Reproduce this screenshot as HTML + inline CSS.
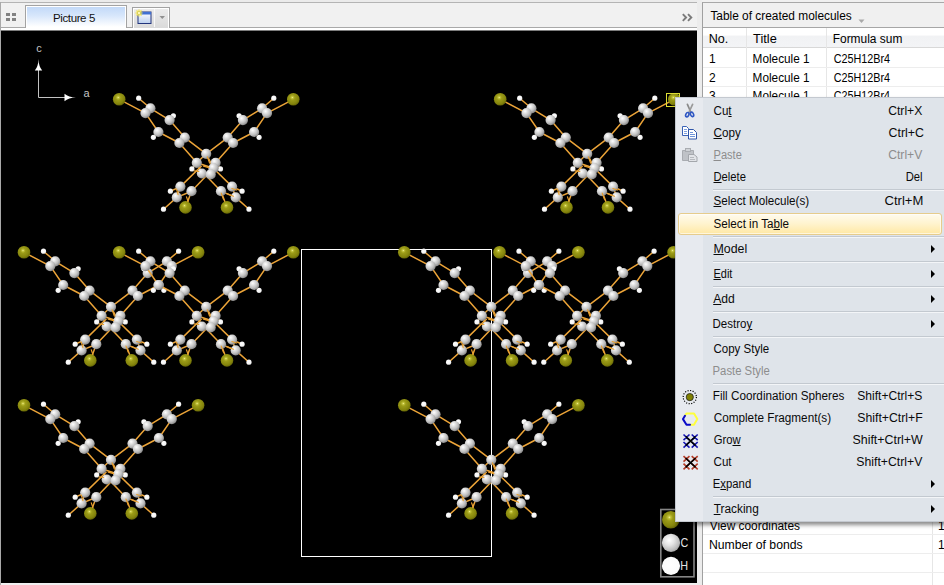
<!DOCTYPE html>
<html><head><meta charset="utf-8"><title>Picture 5</title>
<style>
*{box-sizing:border-box;margin:0;padding:0}
html,body{width:944px;height:585px;overflow:hidden;background:#f0f0f0;font-family:"Liberation Sans",sans-serif;font-size:12px;color:#000}
.abs{position:absolute}
#topbar{left:0;top:0;width:697px;height:30px;background:linear-gradient(#ebebeb 0,#ebebeb 2px,#f1f1f1 3px,#f1f1f1 27px,#fff 28px)}
#topline{left:0;top:2px;width:697px;height:1px;background:#b4b4b4}
#baseline{left:1px;top:27px;width:696px;height:1px;background:#a9a9a9}
#leftline{left:0;top:2px;width:1px;height:583px;background:#a9a9a9}
#tab{left:25px;top:5px;width:102px;height:23px;border:1px solid #a3a3a3;border-bottom:none;background:linear-gradient(#c0d8f8 0%,#d8e7fb 45%,#ffffff 95%);box-shadow:inset 0 0 0 1px #fff}
#tabtxt{left:25px;top:5px;width:102px;height:23px;line-height:26px;text-align:center;font-size:11.5px;letter-spacing:-.4px;color:#111;padding-right:4px}
#btn{left:132px;top:7px;width:38px;height:21px;border:1px solid #a2a2a2;border-bottom:none;background:linear-gradient(#ececec,#dadada);box-shadow:inset 1px 1px 0 #fff,inset -1px 0 0 #fff}
#canvas{left:1px;top:30px;width:696px;height:553px;background:#000;border-top:1px solid #7c7c7c}
#split{left:697px;top:0;width:5px;height:585px;background:#ececec}
#rp{left:702px;top:2px;width:242px;height:583px;background:#fff;border-left:1px solid #a0a0a0;border-top:1px solid #a8a8a8}
#rphead{left:703px;top:3px;width:241px;height:25px;background:#f0f0f0;border-bottom:1px solid #a6a6a6}
.t{position:absolute;white-space:nowrap;font-size:12px;line-height:14px;height:14px;transform-origin:0 50%}
#thead{left:703px;top:28px;width:241px;height:20px;background:linear-gradient(#ffffff 0%,#ffffff 36%,#f1f2f4 44%,#f3f4f6 100%);border-bottom:1px solid #d8d8d8}
.vl{position:absolute;width:1px;background:#e6e6e6}
.hl{position:absolute;height:1px;left:703px;width:241px;background:#ededed}
#menu{left:675px;top:97px;width:273px;height:425px;background:#dfe4ea;border:1px solid #c4c9d0;box-shadow:2px 3px 4px rgba(0,0,0,.45)}
#gutter{left:676px;top:98px;width:27px;height:423px;background:#e7eaef}
.sep{position:absolute;left:713px;width:231px;height:1px;background:#c3c9d0;border-bottom:1px solid #f3f5f8;box-sizing:content-box}
.mi{position:absolute;left:713px;white-space:nowrap;font-size:12px;line-height:14px;height:14px;transform-origin:0 50%;color:#0a0a0a}
.sc{position:absolute;right:21px;white-space:nowrap;font-size:12px;line-height:14px;height:14px;transform-origin:100% 50%;color:#0a0a0a}
.dis{color:#8d8d8d}
u{text-decoration:underline;text-underline-offset:1px}
.arr{position:absolute;left:931px;width:0;height:0;border-left:4px solid #000;border-top:4px solid transparent;border-bottom:4px solid transparent}
#hi{left:678px;top:213px;width:264px;height:22px;border:1px solid #e6cc8c;border-radius:3px;background:linear-gradient(#fffbee 0%,#fff3cd 50%,#ffe8a4 100%);box-shadow:inset 0 0 0 1px rgba(255,255,255,.6)}
</style></head><body>
<div class="abs" id="topbar"></div>
<div class="abs" id="topline"></div>
<div class="abs" id="baseline"></div>
<div class="abs" id="tab"></div>
<div class="abs" id="tabtxt">Picture 5</div>
<div class="abs" id="btn"></div>
<svg class="abs" style="left:0;top:0" width="697" height="30" viewBox="0 0 697 30">
 <g fill="#828282"><rect x="6" y="13" width="4" height="3"/><rect x="12" y="13" width="4" height="3"/><rect x="6" y="18" width="4" height="3"/><rect x="12" y="18" width="4" height="3"/></g>
 <!-- window icon -->
 <defs><linearGradient id="wg" x1="0" y1="0" x2="0" y2="1"><stop offset="0" stop-color="#fff"/><stop offset="1" stop-color="#bcd0ee"/></linearGradient></defs>
 <rect x="138" y="12" width="13" height="11.500" fill="url(#wg)" stroke="#22357c"/>
 <rect x="138" y="12" width="13" height="2.500" fill="#3f70d2"/>
 <g stroke="#f4e44c" stroke-width="1.2"><line x1="139" y1="9.5" x2="139" y2="16.5"/><line x1="135.5" y1="13" x2="142.5" y2="13"/><line x1="136.5" y1="10.5" x2="141.5" y2="15.5"/><line x1="141.5" y1="10.5" x2="136.5" y2="15.5"/></g>
 <rect x="138" y="12" width="2" height="2" fill="#fff8b0"/>
 <line x1="154.5" y1="9" x2="154.5" y2="27" stroke="#f8f8f8"/>
 <path d="M159.5 16 h5.5 l-2.75 3z" fill="#909090"/>
 <g fill="none" stroke="#7a7a7a" stroke-width="1.9"><path d="M682.8 14.200 l3.300 3.300 l-3.300 3.300"/><path d="M688 14.200 l3.300 3.300 l-3.300 3.300"/></g>
</svg>

<div class="abs" id="canvas"></div>
<div class="abs" id="leftline"></div>
<svg class="abs" style="left:2px;top:30px" width="695" height="553" viewBox="0 0 695 553">
<defs>
 <radialGradient id="gc" cx="0.36" cy="0.32" r="0.75"><stop offset="0" stop-color="#ffffff"/><stop offset="0.28" stop-color="#e2e2e2"/><stop offset="0.62" stop-color="#bebebe"/><stop offset="1" stop-color="#7c7c7c"/></radialGradient>
 <radialGradient id="gh" cx="0.4" cy="0.4" r="0.7"><stop offset="0" stop-color="#ffffff"/><stop offset="0.7" stop-color="#f4f4f4"/><stop offset="1" stop-color="#c8c8c8"/></radialGradient>
 <radialGradient id="gb" cx="0.42" cy="0.36" r="0.72"><stop offset="0" stop-color="#f2f29a"/><stop offset="0.1" stop-color="#c4c43c"/><stop offset="0.28" stop-color="#9c9c18"/><stop offset="0.7" stop-color="#84840c"/><stop offset="1" stop-color="#565604"/></radialGradient>
 <radialGradient id="gc2" cx="0.4" cy="0.36" r="0.7"><stop offset="0" stop-color="#ffffff"/><stop offset="0.4" stop-color="#e4e4e4"/><stop offset="0.8" stop-color="#bcbcbc"/><stop offset="1" stop-color="#9a9a9a"/></radialGradient>
 <radialGradient id="gh2" cx="0.45" cy="0.45" r="0.6"><stop offset="0" stop-color="#ffffff"/><stop offset="0.85" stop-color="#fbfbfb"/><stop offset="1" stop-color="#e2e2e2"/></radialGradient>
 <g id="mol">
<g stroke="#eca438" stroke-width="1.5" stroke-linecap="round">
<line x1="0" y1="0" x2="26.3" y2="13.8"/>
<line x1="174.1" y1="0" x2="147.8" y2="13.8"/>
<line x1="19.5" y1="-1.1" x2="31.2" y2="9"/>
<line x1="154.6" y1="-1.1" x2="142.9" y2="9"/>
<line x1="31.2" y1="9" x2="50.4" y2="20.8"/>
<line x1="142.9" y1="9" x2="123.7" y2="20.8"/>
<line x1="26.3" y1="13.8" x2="39.2" y2="32.7"/>
<line x1="147.8" y1="13.8" x2="134.9" y2="32.7"/>
<line x1="50.4" y1="20.8" x2="65.6" y2="38.3"/>
<line x1="123.7" y1="20.8" x2="108.5" y2="38.3"/>
<line x1="39.2" y1="32.7" x2="60.2" y2="43.7"/>
<line x1="134.9" y1="32.7" x2="113.9" y2="43.7"/>
<line x1="31.2" y1="9" x2="26.3" y2="13.8"/>
<line x1="142.9" y1="9" x2="147.8" y2="13.8"/>
<line x1="65.6" y1="38.3" x2="60.2" y2="43.7"/>
<line x1="108.5" y1="38.3" x2="113.9" y2="43.7"/>
<line x1="50.4" y1="20.8" x2="54.2" y2="16.5"/>
<line x1="123.7" y1="20.8" x2="119.9" y2="16.5"/>
<line x1="39.2" y1="32.7" x2="34.2" y2="38"/>
<line x1="134.9" y1="32.7" x2="139.9" y2="38"/>
<line x1="65.6" y1="38.3" x2="87" y2="54.5"/>
<line x1="108.5" y1="38.3" x2="87.1" y2="54.5"/>
<line x1="60.2" y1="43.7" x2="77.6" y2="63.5"/>
<line x1="113.9" y1="43.7" x2="96.4" y2="63.5"/>
<line x1="87" y1="54.5" x2="94.3" y2="68.9"/>
<line x1="87" y1="54.5" x2="77.6" y2="63.5"/>
<line x1="77.6" y1="63.5" x2="82.7" y2="74.2"/>
<line x1="94.3" y1="68.9" x2="91.5" y2="75.1"/>
<line x1="82.7" y1="74.2" x2="91.5" y2="75.1"/>
<line x1="77.6" y1="63.5" x2="94.3" y2="68.9"/>
<line x1="77.6" y1="63.5" x2="72.7" y2="69.6"/>
<line x1="96.4" y1="63.5" x2="101.3" y2="69.6"/>
<line x1="61.2" y1="87.3" x2="82" y2="67"/>
<line x1="112.9" y1="87.3" x2="92.1" y2="67"/>
<line x1="72.3" y1="91.9" x2="94.3" y2="68.9"/>
<line x1="101.8" y1="91.9" x2="79.8" y2="68.9"/>
<line x1="61.2" y1="87.3" x2="51.2" y2="91.9"/>
<line x1="112.9" y1="87.3" x2="122.9" y2="91.9"/>
<line x1="61.2" y1="87.3" x2="57.6" y2="98.1"/>
<line x1="112.9" y1="87.3" x2="116.5" y2="98.1"/>
<line x1="72.3" y1="91.9" x2="57.6" y2="98.1"/>
<line x1="101.8" y1="91.9" x2="116.5" y2="98.1"/>
<line x1="72.3" y1="91.9" x2="66.3" y2="108.1"/>
<line x1="101.8" y1="91.9" x2="107.8" y2="108.1"/>
<line x1="57.6" y1="98.1" x2="44.3" y2="109.9"/>
<line x1="116.5" y1="98.1" x2="129.8" y2="109.9"/>
</g>
<circle cx="19.5" cy="-1.1" r="2.6" fill="url(#gh)"/>
<circle cx="154.6" cy="-1.1" r="2.6" fill="url(#gh)"/>
<circle cx="31.2" cy="9" r="5.1" fill="url(#gc)"/>
<circle cx="142.9" cy="9" r="5.1" fill="url(#gc)"/>
<circle cx="26.3" cy="13.8" r="5.1" fill="url(#gc)"/>
<circle cx="147.8" cy="13.8" r="5.1" fill="url(#gc)"/>
<circle cx="54.2" cy="16.5" r="2.6" fill="url(#gh)"/>
<circle cx="119.9" cy="16.5" r="2.6" fill="url(#gh)"/>
<circle cx="50.4" cy="20.8" r="5.1" fill="url(#gc)"/>
<circle cx="123.7" cy="20.8" r="5.1" fill="url(#gc)"/>
<circle cx="34.2" cy="38" r="2.6" fill="url(#gh)"/>
<circle cx="139.9" cy="38" r="2.6" fill="url(#gh)"/>
<circle cx="39.2" cy="32.7" r="5.1" fill="url(#gc)"/>
<circle cx="134.9" cy="32.7" r="5.1" fill="url(#gc)"/>
<circle cx="65.6" cy="38.3" r="5.1" fill="url(#gc)"/>
<circle cx="108.5" cy="38.3" r="5.1" fill="url(#gc)"/>
<circle cx="60.2" cy="43.7" r="5.1" fill="url(#gc)"/>
<circle cx="113.9" cy="43.7" r="5.1" fill="url(#gc)"/>
<circle cx="0" cy="0" r="6.3" fill="url(#gb)"/>
<circle cx="174.1" cy="0" r="6.3" fill="url(#gb)"/>
<circle cx="87" cy="54.5" r="5.1" fill="url(#gc)"/>
<circle cx="77.6" cy="63.5" r="5.1" fill="url(#gc)"/>
<circle cx="96.4" cy="63.5" r="5.1" fill="url(#gc)"/>
<circle cx="72.7" cy="69.6" r="2.6" fill="url(#gh)"/>
<circle cx="101.3" cy="69.6" r="2.6" fill="url(#gh)"/>
<circle cx="94.3" cy="68.9" r="5.1" fill="url(#gc)"/>
<circle cx="82.7" cy="74.2" r="5.1" fill="url(#gc)"/>
<circle cx="91.5" cy="75.1" r="5.1" fill="url(#gc)"/>
<circle cx="61.2" cy="87.3" r="5.1" fill="url(#gc)"/>
<circle cx="112.9" cy="87.3" r="5.1" fill="url(#gc)"/>
<circle cx="72.3" cy="91.9" r="5.1" fill="url(#gc)"/>
<circle cx="101.8" cy="91.9" r="5.1" fill="url(#gc)"/>
<circle cx="51.2" cy="91.9" r="2.6" fill="url(#gh)"/>
<circle cx="122.9" cy="91.9" r="2.6" fill="url(#gh)"/>
<circle cx="57.6" cy="98.1" r="5.1" fill="url(#gc)"/>
<circle cx="116.5" cy="98.1" r="5.1" fill="url(#gc)"/>
<circle cx="44.3" cy="109.9" r="2.6" fill="url(#gh)"/>
<circle cx="129.8" cy="109.9" r="2.6" fill="url(#gh)"/>
<circle cx="66.3" cy="108.1" r="6.3" fill="url(#gb)"/>
<circle cx="107.8" cy="108.1" r="6.3" fill="url(#gb)"/>
<g stroke="#e8a030" stroke-width="1.2" stroke-linecap="round">
<line x1="75" y1="71.5" x2="79.6" y2="72.2"/>
<line x1="84.3" y1="66.9" x2="89.6" y2="68.4"/>
<line x1="88.1" y1="57.6" x2="90.4" y2="63.8"/>
<line x1="57.3" y1="89.9" x2="58.9" y2="95.3"/>
<line x1="67.3" y1="97.6" x2="68.9" y2="102.2"/>
<line x1="112.7" y1="89.2" x2="117.3" y2="90.7"/>
<line x1="108.1" y1="94.5" x2="114.3" y2="96.9"/>
<line x1="102" y1="93.8" x2="104.3" y2="99.9"/>
</g>
 </g>
</defs>
<!-- unit cell -->
<rect x="299.5" y="219.5" width="190" height="307" fill="none" stroke="#fff" stroke-width="1"/>
<!-- axes -->
<g stroke="#c2c2c2" stroke-width="1" fill="#fff">
 <line x1="36.5" y1="40" x2="36.5" y2="67.5"/><line x1="36.5" y1="67.5" x2="63" y2="67.5"/>
 <path d="M36.5 29 Q36.300 36.500 32.800 40.500 L40.200 40.500 Q36.700 36.500 36.500 29z" stroke="none"/><path d="M74 67.500 Q66.500 67.300 62.500 63.800 L62.500 71.200 Q66.500 67.700 74 67.500z" stroke="none"/>
</g>
<text x="34.2" y="21.500" fill="#c4c4c4" font-family="Liberation Sans, sans-serif" font-size="11">c</text>
<text x="81.500" y="66.800" fill="#c4c4c4" font-family="Liberation Sans, sans-serif" font-size="11">a</text>
<use href="#mol" x="117.2" y="69.3"/>
<use href="#mol" x="498.2" y="69.3"/>
<use href="#mol" x="22" y="222.3"/>
<use href="#mol" x="117.2" y="222.3"/>
<use href="#mol" x="402.3" y="222.3"/>
<use href="#mol" x="497.5" y="222.3"/>
<use href="#mol" x="22" y="375.3"/>
<use href="#mol" x="402.3" y="375.3"/>
<!-- selection box -->
<rect x="664.5" y="63.500" width="13" height="13" fill="none" stroke="#dcdc34" stroke-width="1"/>
<!-- legend -->
<rect x="658.800" y="479.500" width="33.200" height="67.300" fill="#000" stroke="#858585" stroke-width="1.6"/>
<circle cx="668.800" cy="489.800" r="8.800" fill="url(#gb)"/>
<circle cx="669" cy="512.8" r="9.100" fill="url(#gc2)"/>
<circle cx="669" cy="535.9" r="9.100" fill="url(#gh2)"/>
<text transform="translate(678.300,492.300) scale(0.9,1)" fill="#e4e4e4" font-family="Liberation Sans, sans-serif" font-size="12">Br</text>
<text transform="translate(678.400,517.200) scale(0.86,1)" fill="#e4e4e4" font-family="Liberation Sans, sans-serif" font-size="12.5">C</text>
<text transform="translate(678.300,539.900) scale(0.9,1)" fill="#e4e4e4" font-family="Liberation Sans, sans-serif" font-size="12">H</text>
</svg>

<div class="abs" id="split"></div>
<div class="abs" id="rp"></div>
<div class="abs" id="rphead"></div>
<div class="t" style="left:710px;top:9px;transform:translateX(0.4px) scaleX(0.9902)">Table of created molecules</div>
<svg class="abs" style="left:858px;top:19px" width="8" height="5"><path d="M0.500 0.500 h6 l-3 3.500z" fill="#a9a9a9"/></svg>
<div class="abs" id="thead"></div>
<div class="vl" style="left:746px;top:28px;height:70px"></div>
<div class="vl" style="left:826px;top:28px;height:70px"></div>
<div class="t" style="left:709px;top:32px;transform:translateX(-0.25px) scaleX(1.0471)">No.</div>
<div class="t" style="left:753px;top:32px;transform:translateX(0.1px) scaleX(1.0636)">Title</div>
<div class="t" style="left:833px;top:32px;transform:translateX(-0.29px) scaleX(0.9942)">Formula sum</div>
<div class="hl" style="top:67px"></div><div class="hl" style="top:86px"></div>
<div class="t" style="left:709px;top:52px">1</div><div class="t" style="left:753px;top:52px;transform:translateX(-0.38px) scaleX(0.9807)">Molecule 1</div><div class="t" style="left:833px;top:52px;transform:translateX(0.7px) scaleX(0.9)">C25H12Br4</div>
<div class="t" style="left:709px;top:71px">2</div><div class="t" style="left:753px;top:71px;transform:translateX(-0.38px) scaleX(0.9807)">Molecule 1</div><div class="t" style="left:833px;top:71px;transform:translateX(0.7px) scaleX(0.9)">C25H12Br4</div>
<div class="t" style="left:709px;top:89px">3</div><div class="t" style="left:753px;top:89px;transform:translateX(-0.38px) scaleX(0.9807)">Molecule 1</div><div class="t" style="left:833px;top:89px;transform:translateX(0.7px) scaleX(0.9)">C25H12Br4</div>
<!-- bottom table -->
<div class="vl" style="left:932px;top:515px;height:70px"></div>
<div class="hl" style="top:534px"></div><div class="hl" style="top:553px"></div><div class="hl" style="top:572px"></div>
<div class="t" style="left:710px;top:519px;transform:translateX(-0.3px) scaleX(0.99)">View coordinates</div><div class="t" style="left:938px;top:519px">1</div>
<div class="t" style="left:710px;top:538px;transform:translateX(-1.12px) scaleX(1.0187)">Number of bonds</div><div class="t" style="left:938px;top:538px">1</div>

<!-- context menu -->
<div class="abs" id="menu"></div>
<div class="abs" id="gutter"></div>
<div class="abs" id="hi"></div>
<div class="mi" style="top:104px;transform:translateX(0.5px) scaleX(0.9684)">Cu<u>t</u></div><div class="sc" style="top:104px;transform:translateX(-0.4px) scaleX(1.0121)">Ctrl+X</div>
<div class="mi" style="top:126px;transform:translateX(0.5px) scaleX(0.9714)"><u>C</u>opy</div><div class="sc" style="top:126px;transform:translateX(0.63px) scaleX(1.0303)">Ctrl+C</div>
<div class="mi dis" style="top:148px;transform:translateX(0.5px) scaleX(0.9233)"><u>P</u>aste</div><div class="sc dis" style="top:148px;transform:translateX(-0.4px) scaleX(1.0121)">Ctrl+V</div>
<div class="mi" style="top:170px;transform:translateX(0.5px) scaleX(0.9343)"><u>D</u>elete</div><div class="sc" style="top:170px;transform:translateX(-0.4px) scaleX(0.9353)">Del</div>
<div class="sep" style="top:189px"></div>
<div class="mi" style="top:194px;transform:translateX(0.5px) scaleX(0.9684)"><u>S</u>elect Molecule(s)</div><div class="sc" style="top:194px;transform:translateX(0.69px) scaleX(1.0882)">Ctrl+M</div>
<div class="mi" style="top:217px;transform:translateX(0.5px) scaleX(0.9705)">Select in Ta<u>b</u>le</div>
<div class="mi" style="top:242px;transform:translateX(0.5px) scaleX(1.0312)"><u>M</u>odel</div><div class="arr" style="top:245px"></div>
<div class="sep" style="top:236px"></div>
<div class="sep" style="top:261px"></div>
<div class="mi" style="top:267px;transform:translateX(0.5px) scaleX(0.9143)"><u>E</u>dit</div><div class="arr" style="top:270px"></div>
<div class="sep" style="top:286px"></div>
<div class="mi" style="top:292px;transform:translateX(0.2px) scaleX(1.0095)"><u>A</u>dd</div><div class="arr" style="top:295px"></div>
<div class="sep" style="top:311px"></div>
<div class="mi" style="top:317px;transform:translateX(-0.46px) scaleX(0.961)">Destro<u>y</u></div><div class="arr" style="top:320px"></div>
<div class="sep" style="top:336px"></div>
<div class="mi" style="top:342px;transform:translateX(0.5px) scaleX(0.9586)">Copy Style</div>
<div class="mi dis" style="top:364px;transform:translateX(-0.44px) scaleX(0.9424)">Paste Style</div>
<div class="sep" style="top:383px"></div>
<div class="mi" style="top:389px;transform:translateX(-0.28px) scaleX(0.9769)">Fill Coordination Spheres</div><div class="sc" style="top:389px;transform:translateX(-0.3px) scaleX(1.0063)">Shift+Ctrl+S</div>
<div class="mi" style="top:411px;transform:translateX(0.7px) scaleX(0.9783)">Complete Fragment(s)</div><div class="sc" style="top:411px;transform:translateX(-0.3px) scaleX(1.0222)">Shift+Ctrl+F</div>
<div class="mi" style="top:433px;transform:translateX(0.7px) scaleX(0.9379)">Gro<u>w</u></div><div class="sc" style="top:433px;transform:translateX(-0.3px) scaleX(1.0328)">Shift+Ctrl+W</div>
<div class="mi" style="top:455px;transform:translateX(0.5px) scaleX(0.9684)">Cut</div><div class="sc" style="top:455px;transform:translateX(-0.3px) scaleX(1.0219)">Shift+Ctrl+V</div>
<div class="mi" style="top:477px;transform:translateX(-0.24px) scaleX(0.9436)">E<u>x</u>pand</div><div class="arr" style="top:480px"></div>
<div class="sep" style="top:496px"></div>
<div class="mi" style="top:502px;transform:translateX(0.7px) scaleX(0.9889)"><u>T</u>racking</div><div class="arr" style="top:505px"></div>
<svg class="abs" id="icons" style="left:676px;top:97px" width="30" height="425" viewBox="676 97 30 425">
<!-- scissors -->
<g fill="none" stroke-linecap="round">
 <path d="M687.400 104.300 L691 112.500" stroke="#8a8a8a" stroke-width="1.7"/>
 <path d="M692.600 104.300 L688.800 112.500" stroke="#9a9a9a" stroke-width="1.7"/>
 <ellipse cx="687.300" cy="114.700" rx="1.500" ry="2.300" stroke="#2f57c3" stroke-width="1.600" transform="rotate(25 687.300 114.700)"/>
 <ellipse cx="692" cy="114.400" rx="1.500" ry="2.300" stroke="#2f57c3" stroke-width="1.600" transform="rotate(-25 692 114.400)"/>
</g>
<!-- copy -->
<g stroke="#3b62b5" stroke-width="1" fill="#fff">
 <path d="M682.500 126.500 h4 l2 2 v7 h-6z"/>
 <path d="M684 129.500h3M684 131.500h3M684 133.500h3" stroke="#7fa0de"/>
 <path d="M688.500 129.500 h5 l3 3 v6.500 h-8z" stroke="#2f55a8"/>
 <path d="M690 132.500h3M690 134.500h5M690 136.500h5" stroke="#6f94da"/>
</g>
<!-- paste disabled -->
<g stroke="#a9acb1" stroke-width="1" fill="#bfc2c7">
 <path d="M682.500 150.500 h11 v10 h-11z"/>
 <rect x="685.500" y="148.500" width="5" height="3" fill="#cfd2d6"/>
 <path d="M688.500 154.500 h5.500 l3 2.500 v4.500 h-8.500z" fill="#e2e4e8" stroke="#a4a7ac"/>
 <path d="M690 157.500h4M690 159.500h5" stroke="#b6b9be"/>
</g>
<!-- fill coordination spheres -->
<circle cx="689.8" cy="397.1" r="6.6" fill="none" stroke="#000" stroke-width="1.2" stroke-dasharray="1.1 1.5"/>
<circle cx="689.8" cy="397.1" r="3.6" fill="#808000" stroke="#222" stroke-width="0.8"/>
<!-- complete fragment -->
<g fill="none" stroke-width="2" stroke-linejoin="round" stroke-linecap="round">
 <path d="M685 415.800 l1.500 -2.300 h7.500 l3.300 5.600 l-3.300 5.600 h-3.500" stroke="#ffff3c"/>
 <path d="M685 415.800 l-2 3.300 l3.500 5.600 h3.500" stroke="#0a0ac8"/>
</g>
<!-- grow -->
<g fill="none" stroke-linecap="butt"><path d="M683.5 434.5l6.0 5.6M689.5 434.5l-6.0 5.6M683.5 442.0l6.0 5.6M689.5 442.0l-6.0 5.6M691.7 434.5l6.0 5.6M697.7 434.5l-6.0 5.6M691.7 442.0l6.0 5.6M697.7 442.0l-6.0 5.6" stroke="#1414b4" stroke-width="1.6"/><path d="M685.6 436.4L695.6 445.7M695.6 436.4L685.6 445.7" stroke="#000" stroke-width="1.6"/></g>
<!-- cut -->
<g fill="none" stroke-linecap="butt"><path d="M683.5 456.1l6.0 5.6M689.5 456.1l-6.0 5.6M683.5 463.7l6.0 5.6M689.5 463.7l-6.0 5.6M691.7 456.1l6.0 5.6M697.7 456.1l-6.0 5.6M691.7 463.7l6.0 5.6M697.7 463.7l-6.0 5.6" stroke="#b43c26" stroke-width="1.6"/><path d="M685.6 458.0L695.6 467.4M695.6 458.0L685.6 467.4" stroke="#000" stroke-width="1.6"/></g>
</svg>
</body></html>
